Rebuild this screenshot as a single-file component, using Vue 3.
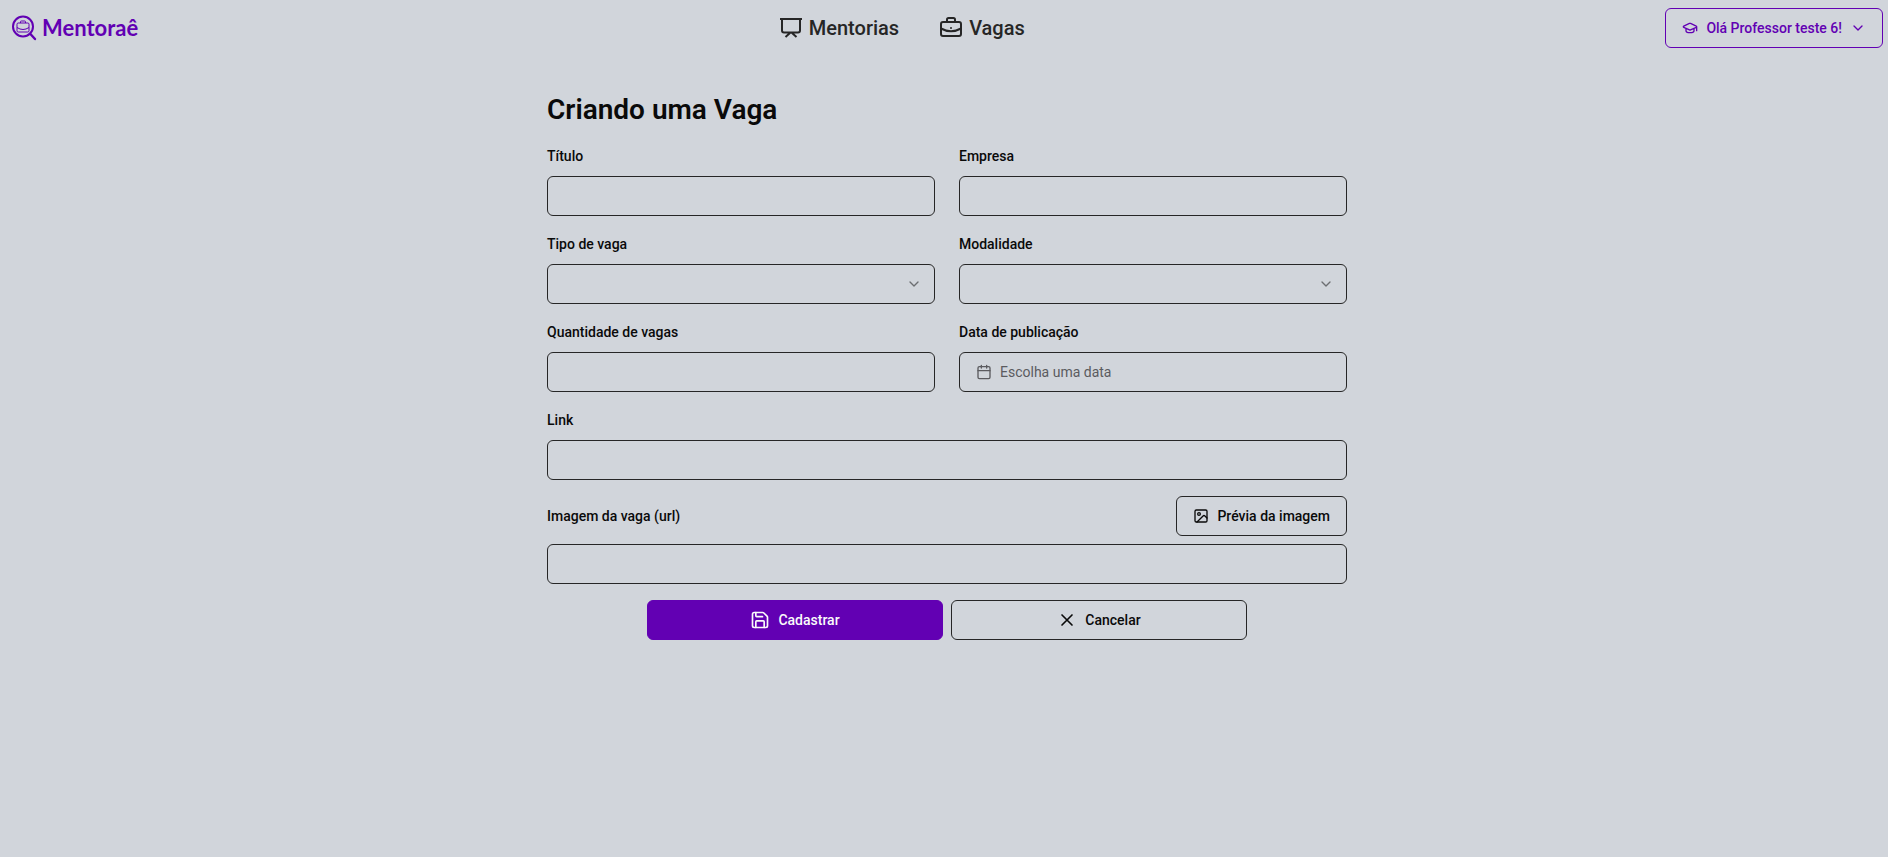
<script setup>
import { reactive } from 'vue'

const form = reactive({
  titulo: '',
  empresa: '',
  tipo: '',
  modalidade: '',
  quantidade: '',
  link: '',
  imagem: '',
})
</script>

<template>
  <div class="page">
    <header class="topbar">
      <a class="brand" href="#">
        <svg class="brand-icon" viewBox="0 0 26 26" fill="none" stroke="currentColor" aria-hidden="true">
          <circle cx="11" cy="11.5" r="10" stroke-width="2" />
          <path d="M18.200 18.700 23 24" stroke-width="2.400" stroke-linecap="round" />
          <rect x="5" y="8" width="12" height="9" rx="1.200" stroke-width="1" />
          <path d="M8.500 8V6.800q0-.8.8-.8h3.400q.8 0 .8.8V8M5 12.500q6 4 12 0" stroke-width="1" />
        </svg>
        <span>Mentoraê</span>
      </a>

      <nav class="menu">
        <a href="#">
          <svg class="icon-lg" viewBox="0 0 24 24" fill="none" stroke="currentColor" stroke-width="2" aria-hidden="true">
            <path d="M1 3h22M3 3v11.500a2 2 0 0 0 2 2h14a2 2 0 0 0 2-2V3M11.500 16.500 6.500 21M12.500 16.500l5 4.500" />
          </svg>
          Mentorias
        </a>
        <a href="#">
          <svg class="icon-lg" viewBox="0 0 24 24" fill="none" stroke="currentColor" stroke-width="2" aria-hidden="true">
            <rect x="2" y="6" width="20" height="14" rx="2" />
            <path d="M8 6V3.500Q8 2 9.500 2h5Q16 2 16 3.500V6M2 12.500q10 5.500 20 0" />
            <circle cx="12" cy="12" r="1" fill="currentColor" stroke="none" />
          </svg>
          Vagas
        </a>
      </nav>

      <button class="btn user" type="button">
        <svg class="icon" viewBox="0 0 24 24" fill="none" stroke="currentColor" stroke-width="2" stroke-linecap="round" stroke-linejoin="round" aria-hidden="true">
          <path d="M21.420 10.922a1 1 0 0 0-.019-1.838L12.830 5.180a2 2 0 0 0-1.660 0L2.600 9.080a1 1 0 0 0 0 1.832l8.570 3.908a2 2 0 0 0 1.660 0zM22 10v6M6 12.500V16a6 3 0 0 0 12 0v-3.500" />
        </svg>
        Olá Professor teste 6!
        <svg class="icon" viewBox="0 0 24 24" fill="none" stroke="currentColor" stroke-width="2" stroke-linecap="round" stroke-linejoin="round" aria-hidden="true">
          <path d="m6 9 6 6 6-6" />
        </svg>
      </button>
    </header>

    <main class="content">
      <form class="form" @submit.prevent>
        <h1>Criando uma Vaga</h1>

        <div class="grid">
          <div class="field">
            <label for="titulo">Título</label>
            <input id="titulo" v-model="form.titulo" class="control" type="text">
          </div>
          <div class="field">
            <label for="empresa">Empresa</label>
            <input id="empresa" v-model="form.empresa" class="control" type="text">
          </div>
          <div class="field">
            <label for="tipo">Tipo de vaga</label>
            <div class="select">
              <select id="tipo" v-model="form.tipo" class="control">
                <option value=""></option>
              </select>
              <svg class="icon chevron" viewBox="0 0 24 24" fill="none" stroke="currentColor" stroke-width="2" stroke-linecap="round" stroke-linejoin="round" aria-hidden="true">
                <path d="m6 9 6 6 6-6" />
              </svg>
            </div>
          </div>
          <div class="field">
            <label for="modalidade">Modalidade</label>
            <div class="select">
              <select id="modalidade" v-model="form.modalidade" class="control">
                <option value=""></option>
              </select>
              <svg class="icon chevron" viewBox="0 0 24 24" fill="none" stroke="currentColor" stroke-width="2" stroke-linecap="round" stroke-linejoin="round" aria-hidden="true">
                <path d="m6 9 6 6 6-6" />
              </svg>
            </div>
          </div>
          <div class="field">
            <label for="quantidade">Quantidade de vagas</label>
            <input id="quantidade" v-model="form.quantidade" class="control" type="text" inputmode="numeric">
          </div>
          <div class="field">
            <label for="data">Data de publicação</label>
            <button id="data" class="btn date" type="button">
              <svg class="icon" viewBox="0 0 24 24" fill="none" stroke="currentColor" stroke-width="2" stroke-linecap="round" stroke-linejoin="round" aria-hidden="true">
                <rect x="3" y="4" width="18" height="18" rx="2" />
                <path d="M16 2v4M8 2v4M3 10h18" />
              </svg>
              Escolha uma data
            </button>
          </div>
        </div>

        <div class="field">
          <label for="link">Link</label>
          <input id="link" v-model="form.link" class="control" type="text">
        </div>

        <div class="field">
          <div class="field-head">
            <label for="imagem">Imagem da vaga (url)</label>
            <button class="btn" type="button">
              <svg class="icon" viewBox="0 0 24 24" fill="none" stroke="currentColor" stroke-width="2" stroke-linecap="round" stroke-linejoin="round" aria-hidden="true">
                <rect x="3" y="3" width="18" height="18" rx="2" />
                <circle cx="9" cy="9" r="2" />
                <path d="m21 15-3.090-3.090a2 2 0 0 0-2.820 0L6 21" />
              </svg>
              Prévia da imagem
            </button>
          </div>
          <input id="imagem" v-model="form.imagem" class="control" type="text">
        </div>

        <div class="actions">
          <button class="btn primary" type="submit">
            <svg class="icon-md" viewBox="0 0 24 24" fill="none" stroke="currentColor" stroke-width="2" stroke-linecap="round" stroke-linejoin="round" aria-hidden="true">
              <path d="M15.200 3a2 2 0 0 1 1.400.6l3.800 3.800a2 2 0 0 1 .6 1.400V19a2 2 0 0 1-2 2H5a2 2 0 0 1-2-2V5a2 2 0 0 1 2-2z" />
              <path d="M17 21v-7a1 1 0 0 0-1-1H8a1 1 0 0 0-1 1v7M7 3v4a1 1 0 0 0 1 1h7" />
            </svg>
            Cadastrar
          </button>
          <button class="btn" type="button">
            <svg class="icon-md" viewBox="0 0 24 24" fill="none" stroke="currentColor" stroke-width="2" stroke-linecap="round" stroke-linejoin="round" aria-hidden="true">
              <path d="M18 6 6 18M6 6l12 12" />
            </svg>
            Cancelar
          </button>
        </div>
      </form>
    </main>
  </div>
</template>

<style>
body {
  margin: 0;
  background: #d1d5db;
}
</style>

<style scoped>
.page {
  min-height: 100vh;
  background: #d1d5db;
  color: #0a0a0a;
  font-family: Roboto, "Liberation Sans", sans-serif;
  font-size: 14px;
  line-height: 24px;
}

.page *,
.page {
  box-sizing: border-box;
}

svg {
  display: block;
  flex: none;
}

.topbar {
  display: flex;
  align-items: center;
  justify-content: space-between;
  padding: 8px 5px 8px 12px;
}

a {
  display: flex;
  align-items: center;
  color: inherit;
  text-decoration: none;
}

.brand {
  gap: 4px;
  color: #6200b3;
  font-family: Lato, "Noto Sans", sans-serif;
  font-size: 22px;
  font-weight: 700;
}

.brand-icon {
  width: 26px;
  height: 26px;
}

.menu {
  display: flex;
  gap: 40px;
  color: #262626;
  font-size: 20px;
  font-weight: 500;
}

.menu a {
  gap: 6px;
}

.icon {
  width: 16px;
  height: 16px;
}

.icon-md {
  width: 20px;
  height: 20px;
}

.icon-lg {
  width: 24px;
  height: 24px;
}

.btn {
  display: flex;
  align-items: center;
  justify-content: center;
  gap: 8px;
  height: 40px;
  padding: 0 16px;
  border: 1px solid #262626;
  border-radius: 6px;
  background: transparent;
  color: inherit;
  font: inherit;
  font-weight: 500;
  cursor: pointer;
}

.user {
  border-color: #6200b3;
  color: #6200b3;
}

.content {
  padding: 36px 0 24px 6px;
}

.form {
  display: flex;
  flex-direction: column;
  gap: 16px;
  max-width: 800px;
  margin: 0 auto;
}

h1 {
  margin: 0;
  font-size: 28px;
  line-height: 36px;
  font-weight: 600;
}

.grid {
  display: grid;
  grid-template-columns: 1fr 1fr;
  gap: 16px 24px;
}

.field {
  display: flex;
  flex-direction: column;
  gap: 8px;
}

.field-head {
  display: flex;
  align-items: center;
  justify-content: space-between;
}

label {
  font-weight: 500;
}

.control {
  display: block;
  width: 100%;
  height: 40px;
  padding: 0 12px;
  border: 1px solid #262626;
  border-radius: 6px;
  background: transparent;
  color: inherit;
  font: inherit;
  appearance: none;
}

.select {
  position: relative;
}

.chevron {
  position: absolute;
  top: 12px;
  right: 13px;
  opacity: 0.5;
  pointer-events: none;
}

.date {
  justify-content: flex-start;
  color: #5b5b5f;
  font-weight: 400;
}

.actions {
  display: grid;
  grid-template-columns: 1fr 1fr;
  gap: 8px;
  width: 75%;
  margin: 0 auto;
}

.primary {
  border-color: #6200b3;
  background: #6200b3;
  color: #fafafa;
}
</style>
